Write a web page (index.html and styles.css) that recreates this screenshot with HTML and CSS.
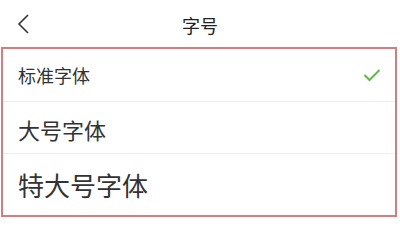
FILE: index.html
```html
<!DOCTYPE html>
<html lang="zh-CN">
<head>
    <meta charset="UTF-8">
    <meta name="viewport" content="width=device-width, initial-scale=1.0">
    <title>字号</title>
    <link rel="stylesheet" href="styles.css">
</head>
<body>

    <div class="header">
        <a class="back" href="#">
            <svg width="13" height="20" viewBox="0 0 13 20">
                <polyline points="11,1 2,10 11,19" fill="none" stroke="#333" stroke-width="1.6"/>
            </svg>
        </a>
        <h1>字号</h1>
    </div>

    <!-- font size options -->
    <div class="size-list">
        <div class="size-item item-normal selected">
            <span>标准字体</span>
            <svg class="check" width="18" height="14" viewBox="0 0 18 14">
                <polyline points="1.5,7 6.5,12 16.5,2" fill="none" stroke="#62b94a" stroke-width="2"/>
            </svg>
        </div>
        <div class="size-item item-large">
            <span>大号字体</span>
        </div>
        <div class="size-item item-xlarge">
            <span>特大号字体</span>
        </div>
    </div>

</body>
</html>
```

FILE: styles.css
```css
body {
    font-family: 'Noto Sans CJK SC', 'Noto Sans', sans-serif;
    margin: 0;
    background-color: #fff;
    color: #333;
}

.header {
    height: 47px;
    display: flex;
    align-items: center;
    justify-content: center;
    position: relative;
}

.header h1 {
    margin: 0;
    padding-top: 3px;
    font-size: 18px;
    font-weight: normal;
    color: #222;
    line-height: 1;
}

.back {
    position: absolute;
    left: 17px;
    top: 14px;
    display: flex;
}

.size-list {
    margin-left: 1px;
    width: 392px;
    border: 2px solid #d47d7a;
}

.size-item {
    display: flex;
    align-items: center;
    justify-content: space-between;
    padding: 0 14px 0 15px;
    border-bottom: 1px solid #eee;
    line-height: 1;
}

.size-item:last-child {
    border-bottom: none;
}

.item-normal {
    height: 52px;
    font-size: 18px;
}

.item-large {
    height: 52px;
    box-sizing: border-box;
    padding-top: 3px;
    font-size: 22px;
}

.item-xlarge {
    height: 61px;
    font-size: 26px;
}

.check {
    display: block;
}
```
